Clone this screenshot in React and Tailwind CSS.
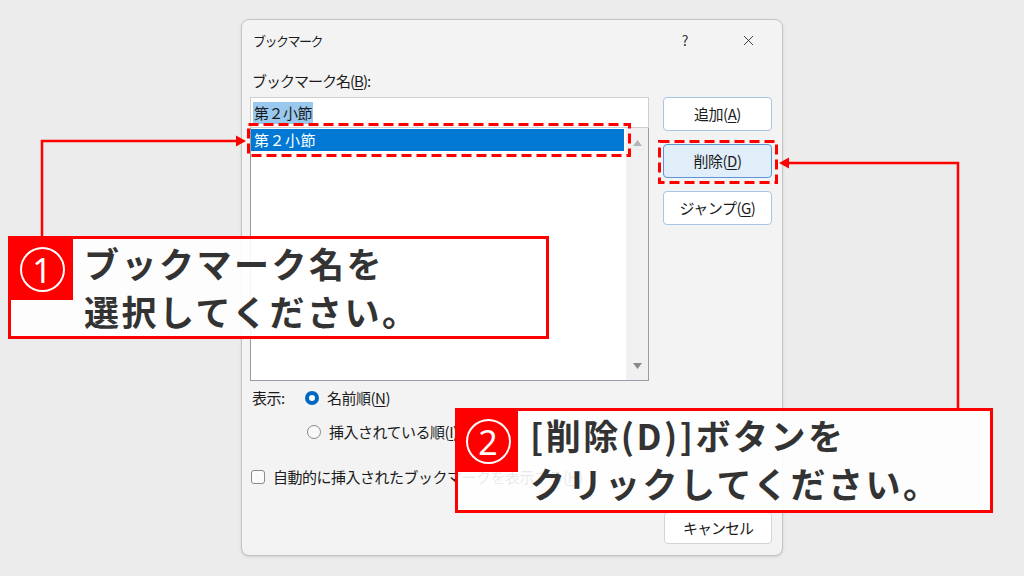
import React from "react";
import { X } from "lucide-react";

const font = "font-['Noto_Sans_CJK_JP','Noto_Sans',sans-serif]";

const U = ({ children }) => (
  <span className="underline underline-offset-2 decoration-1">{children}</span>
);

const Button = ({ children, active }) => (
  <div
    className={
      "h-[34px] w-[109px] rounded-[4px] border flex items-center justify-center text-[15px] tracking-[-0.5px] text-[#1b1b1b] " +
      (active
        ? "bg-[#e0eef9] border-[#5a95d6]"
        : "bg-white border-[#a9c4e4]")
    }
  >
    {children}
  </div>
);

const Triangle = ({ down }) => (
  <svg width="9" height="6" viewBox="0 0 9 6">
    <path
      d={down ? "M0 0 H9 L4.5 6 Z" : "M0 6 H9 L4.5 0 Z"}
      fill={down ? "#8a8a8a" : "#b5b5b5"}
    />
  </svg>
);

// red dashed frame drawn over a control
const Dashed = ({ className, w, h }) => (
  <svg className={"absolute pointer-events-none " + className} width={w} height={h}>
    <rect
      x="1.5"
      y="1.5"
      width={w - 3}
      height={h - 3}
      fill="none"
      stroke="#ff0000"
      strokeWidth="3"
      strokeDasharray="10 5"
    />
  </svg>
);

function Dialog() {
  return (
    <div className="ml-[241px] w-[542px] h-[537px] rounded-[8px] border border-[#c4c4c4] bg-[#f3f3f3] shadow-sm flex flex-col">
      {/* title bar */}
      <div className="h-[41px] flex items-center pl-[11px] text-[#1b1b1b]">
        <span className="text-[13px] tracking-[-1.5px]">ブックマーク</span>
        <span className="ml-auto w-[40px] text-center text-[14px] text-[#333]">?</span>
        <span className="ml-[20px] mr-[11px] w-[46px] flex justify-center">
          <X size={17} strokeWidth={1.2} color="#222" />
        </span>
      </div>

      <div className="pl-[8px] flex flex-col text-[15px] text-[#1b1b1b] tracking-[-0.5px]">
        <div className="mt-[10px] h-[20px] leading-[20px] pl-[2px] tracking-[-1px]">
          ブックマーク名(<U>B</U>):
        </div>

        <div className="mt-[6px] flex">
          {/* left column */}
          <div className="w-[399px] flex flex-col">
            <div className="h-[31px] bg-white border border-[#cfcfcf] flex items-center pl-[2px]">
              <span className="bg-[#99c9ef] px-[1px] leading-[22px]">第２小節</span>
            </div>
            <div className="relative h-[253px] bg-white border border-t-0 border-[#9a9aa6] flex">
              <div className="flex-1 pt-[1px]">
                <div className="h-[22px] w-[373px] bg-[#0078d4] text-white leading-[22px] pl-[3px] tracking-[0.5px]">
                  第２小節
                </div>
              </div>
              <div className="w-[22px] bg-[#f0f0f0] flex flex-col items-center justify-between pt-[12px] pb-[11px]">
                <Triangle />
                <Triangle down />
              </div>
              <Dashed className="left-[-4px] top-[-5px]" w={384} h={34} />
            </div>
          </div>

          {/* right column */}
          <div className="ml-[14px] flex flex-col gap-[13px]">
            <Button>
              追加(<U>A</U>)
            </Button>
            <div className="relative">
              <Button active>
                削除(<U>D</U>)
              </Button>
              <Dashed className="left-[-5px] top-[-4px]" w={120} h={44} />
            </div>
            <Button>
              ジャンプ(<U>G</U>)
            </Button>
          </div>
        </div>

        {/* display options */}
        <div className="mt-[7px] h-[20px] flex items-center">
          <span className="pl-[2px] w-[55px]">表示:</span>
          <span className="w-[14px] h-[14px] rounded-full bg-[#0067c0] flex items-center justify-center">
            <span className="w-[6px] h-[6px] rounded-full bg-white" />
          </span>
          <span className="ml-[8px]">
            名前順(<U>N</U>)
          </span>
        </div>
        <div className="mt-[14px] h-[20px] flex items-center pl-[57px]">
          <span className="w-[14px] h-[14px] rounded-full border border-[#8a8a8a] bg-[#f8f8f8]" />
          <span className="ml-[8px]">
            挿入されている順(<U>I</U>)
          </span>
        </div>
        <div className="mt-[25px] h-[20px] flex items-center pl-[1px]">
          <span className="w-[14px] h-[14px] rounded-[3px] border border-[#8a8a8a] bg-[#fbfbfb]" />
          <span className="ml-[8px]">
            自動的に挿入されたブックマークを表示する(<U>H</U>)
          </span>
        </div>

        <div className="mt-[25px] flex justify-end pr-[10px]">
          <div className="h-[32px] w-[108px] rounded-[4px] border border-[#d4d4d4] bg-white flex items-center justify-center tracking-[-1px]">
            キャンセル
          </div>
        </div>
      </div>
    </div>
  );
}

const Note = ({ className, num, lines, sqW, sqH, gap }) => (
  <div
    className={
      "absolute border-[3px] border-[#ff0000] bg-white/90 flex items-start " + className
    }
  >
    <div
      className="bg-[#ff0000] flex items-center justify-center shrink-0"
      style={{ width: sqW, height: sqH }}
    >
      <div className="w-[45px] h-[45px] rounded-full border-[2px] border-white flex items-center justify-center text-white text-[34px] leading-none font-['Noto_Sans',sans-serif]">
        {num}
      </div>
    </div>
    <div
      className="font-bold text-[35px] tracking-[2.5px] text-[#333] whitespace-nowrap"
      style={{ paddingLeft: gap, lineHeight: "48px" }}
    >
      {lines.map((l, i) => (
        <div key={i}>{l}</div>
      ))}
    </div>
  </div>
);

export default function App() {
  return (
    <div className={"relative w-[1024px] h-[576px] overflow-hidden bg-[#ececec] pt-[19px] " + font}>
      <Dialog />

      <Note
        className="left-[8px] top-[236px] w-[541px] h-[103px]"
        num="1"
        lines={["ブックマーク名を", "選択してください。"]}
        sqW={62}
        sqH={61}
        gap={11}
      />
      <Note
        className="left-[455px] top-[408px] w-[538px] h-[105px]"
        num="2"
        lines={["[削除(D)]ボタンを", "クリックしてください。"]}
        sqW={60}
        sqH={61}
        gap={12}
      />

      {/* arrows */}
      <svg className="absolute left-0 top-0 pointer-events-none" width="1024" height="576">
        <path d="M42 236 V141 H238" fill="none" stroke="#ff0000" strokeWidth="2.5" />
        <path d="M236 135.5 L246 141 L236 146.5 Z" fill="#ff0000" />
        <path d="M958 408 V163 H788" fill="none" stroke="#ff0000" strokeWidth="2.5" />
        <path d="M789 157.5 L779 163 L789 168.5 Z" fill="#ff0000" />
      </svg>
    </div>
  );
}
